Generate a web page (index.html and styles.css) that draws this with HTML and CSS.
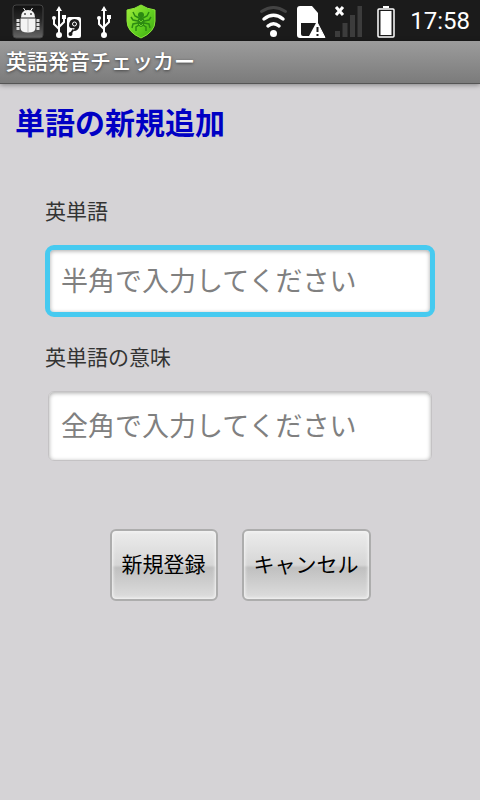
FILE: index.html
```html
<!DOCTYPE html>
<html lang="ja">

<head>
  <meta charset="UTF-8">
  <meta name="viewport" content="width=device-width, initial-scale=1">
  <title>英語発音チェッカー</title>
  <link rel="stylesheet" href="styles.css">
</head>

<body>
  <div class="status-bar">
    <!-- debug -->
    <svg width="32" height="40" viewBox="0 0 32 40" aria-hidden="true">
      <defs>
        <linearGradient id="tile" x1="0" y1="0" x2="0" y2="1">
          <stop offset="0" stop-color="#101010"/>
          <stop offset="0.45" stop-color="#282828"/>
          <stop offset="1" stop-color="#666"/>
        </linearGradient>
      </defs>
      <rect x="1" y="4" width="30" height="33" rx="3" fill="url(#tile)" stroke="#444"/>
      <path d="M9 16.500q0-7.500 7-7.500t7 7.500z" fill="#f4f4f4"/>
      <path d="M11.500 7l2 3M20.500 7l-2 3" stroke="#f4f4f4"/>
      <path d="M8.500 17.500h15V27q0 4.500-7.500 4.500T8.500 27z" fill="#f4f4f4"/>
      <path d="M4.500 19.500h3M24.500 19.500h3M4.500 23.500h3M24.500 23.500h3M4.500 27.500h3M24.500 27.500h3" stroke="#ddd" stroke-width="3"/>
      <path d="M16 18v13" stroke="#bbb"/>
      <circle cx="13" cy="13" r="1" fill="#444"/>
      <circle cx="19" cy="13" r="1" fill="#444"/>
    </svg>
    <!-- usb storage -->
    <svg width="36" height="40" viewBox="0 0 36 40" aria-hidden="true">
      <g fill="none" stroke="#fff" stroke-width="2">
        <path d="M7 9v24M2 18v5l5 5M12 16v5l-5 5"/>
        <circle cx="7" cy="34" r="2" fill="#fff"/>
      </g>
      <path d="M7 5l-3 5h6z" fill="#fff"/>
      <circle cx="2" cy="17" r="2" fill="#fff"/>
      <rect x="10" y="14" width="4" height="4" fill="#fff"/>
      <rect x="15" y="16" width="14" height="21" rx="2" fill="#fff"/>
      <path d="M17 25q0-7 5.500-7t5 6-6 6q1-2 1-3-5 1-5.500-2z" fill="#1b1b1b"/>
      <circle cx="22.500" cy="23" r="2" fill="none" stroke="#fff"/>
      <path d="M18 33.500l3.500-5" stroke="#1b1b1b" stroke-width="2"/>
      <circle cx="18.500" cy="33" r="2" fill="#1b1b1b"/>
    </svg>
    <!-- usb -->
    <svg width="22" height="40" viewBox="0 0 22 40" aria-hidden="true">
      <g fill="none" stroke="#fff" stroke-width="2">
        <path d="M8 9v24M3 18v5l5 5M13 16v5l-5 5"/>
        <circle cx="8" cy="34" r="2" fill="#fff"/>
      </g>
      <path d="M8 5l-3 5h6z" fill="#fff"/>
      <circle cx="3" cy="17" r="2" fill="#fff"/>
      <rect x="11" y="14" width="4" height="4" fill="#fff"/>
    </svg>
    <!-- antivirus -->
    <svg width="30" height="40" viewBox="0 0 30 40" aria-hidden="true">
      <defs>
        <linearGradient id="shield" x1="0" y1="0" x2="1" y2="1">
          <stop offset="0" stop-color="#a4ec3c"/>
          <stop offset="0.5" stop-color="#66d422"/>
          <stop offset="1" stop-color="#3aa610"/>
        </linearGradient>
      </defs>
      <path d="M15 4q6 4 14 5v11q0 11-14 17Q1 31 1 20V9q8-1 14-5z" fill="url(#shield)" stroke="#8ae63a"/>
      <ellipse cx="15" cy="21" rx="3.500" ry="5" fill="#2c8a12"/>
      <circle cx="15" cy="14" r="3" fill="#2c8a12"/>
      <path d="M13 17l-4-2-2-4M17 17l4-2 2-4M12 20l-5-1-2-3M18 20l5-1 2-3M12 22l-5 1-1 4M18 22l5 1 1 4M13 24l-3 2v4M17 24l3 2v4" fill="none" stroke="#2c8a12" stroke-width="1.500"/>
      <path d="M13 19l2 2 2-2M13 23l2 2 2-2" fill="none" stroke="#66cc2a"/>
    </svg>

    <span class="spacer"></span>

    <!-- wifi -->
    <svg width="29" height="40" viewBox="0 0 29 40" aria-hidden="true">
      <g fill="none" stroke="#fff" stroke-width="3.500" stroke-linecap="round">
        <path d="M2.500 10.500Q14.500 2.500 26.500 10.500" stroke="#444" stroke-width="3"/>
        <path d="M5 18Q14.500 10.500 24 18"/>
        <path d="M9 25Q14.500 20.500 20 25"/>
      </g>
      <circle cx="14.500" cy="32.500" r="3.500" fill="#fff"/>
    </svg>
    <!-- sim warning -->
    <svg width="30" height="40" viewBox="0 0 30 40" aria-hidden="true">
      <path d="M4 5h12l6 7v23q0 2-2 2H4q-3 0-3-3V8q0-3 3-3z" fill="#fff"/>
      <path d="M5 22h15l-7 13H7q-2 0-2-2z" fill="#1b1b1b"/>
      <path d="M21.500 22L29 36.500H14z" fill="#fff" stroke="#fff" stroke-linejoin="round"/>
      <path d="M21.500 26v5M21.500 33v2" stroke="#1b1b1b" stroke-width="2"/>
    </svg>
    <!-- no signal -->
    <svg width="30" height="40" viewBox="0 0 30 40" aria-hidden="true">
      <path d="M1 30h5v6H1zM8.500 22h5v14h-5zM16 14h5v22h-5zM23.500 5h4.500v31h-4.500z" fill="#3c3c3c"/>
      <path d="M2 6l7 8M9 6l-7 8" stroke="#fff" stroke-width="3"/>
    </svg>
    <!-- battery -->
    <svg width="30" height="40" viewBox="0 0 30 40" aria-hidden="true">
      <rect x="11" y="5" width="6" height="2" fill="#fff"/>
      <rect x="6" y="8" width="16" height="28" rx="1" fill="none" stroke="#fff" stroke-width="1.500"/>
      <rect x="8.500" y="10" width="11" height="24" fill="#fff"/>
    </svg>
    <time class="clock" datetime="17:58">17:58</time>
  </div>

  <header class="title-bar">英語発音チェッカー</header>

  <main>
    <h1>単語の新規追加</h1>

    <form class="word-form">
      <label for="word">英単語</label>
      <input type="text" id="word" class="active" placeholder="半角で入力してください">

      <label for="meaning">英単語の意味</label>
      <input type="text" id="meaning" placeholder="全角で入力してください">

      <div class="buttons">
        <button type="button">新規登録</button>
        <button type="button">キャンセル</button>
      </div>
    </form>
  </main>
</body>

</html>
```
FILE: styles.css
```css
* {
  box-sizing: border-box;
}

body {
  margin: 0;
  min-height: 100vh;
  background-color: #d5d3d6;
  font-family: "Noto Sans CJK JP", sans-serif;
  color: #333;
}

.status-bar {
  display: flex;
  align-items: center;
  gap: 8px;
  height: 41px;
  padding: 0 10px 0 12px;
  background-color: #1b1b1b;
}

.status-bar svg {
  flex: none;
}

.spacer {
  flex: 1;
}

.clock {
  color: #fff;
  font-family: Roboto, sans-serif;
  font-size: 24px;
  line-height: 40px;
}

.title-bar {
  height: 43px;
  padding: 0 6px;
  border-bottom: 1px solid #555;
  background: linear-gradient(#9c9c9c, #7b7b7b);
  box-shadow: 0 1px 5px rgba(0, 0, 0, 0.4);
  color: #fff;
  font-size: 21px;
  font-weight: 500;
  line-height: 38px;
  text-shadow: 0 1px 3px #444;
}

main {
  padding: 14px 15px;
}

h1 {
  margin: 0;
  color: #0000c4;
  font-size: 30px;
  font-weight: 700;
  line-height: 46px;
}

.word-form {
  padding: 49px 30px 0;
}

label {
  display: block;
  font-size: 21px;
  line-height: 34px;
}

input {
  display: block;
  width: calc(100% - 6px);
  height: 70px;
  margin: 18px 3px 68px;
  padding: 0 12px 4px;
  border: 1px solid #c4c2c4;
  border-radius: 6px;
  background-color: #fff;
  box-shadow: inset 0 1px 4px rgba(0, 0, 0, 0.35);
  font-family: inherit;
  font-size: 27px;
}

input.active {
  width: 100%;
  height: 72px;
  margin: 18px 0 22px;
  border: 5px solid #46caf0;
  border-radius: 9px;
  padding: 0 11px 4px;
  box-shadow: inset 0 1px 4px rgba(0, 0, 0, 0.35);
}

input:focus {
  outline: none;
  border-color: #46caf0;
}

input::placeholder {
  color: #808080;
}

.buttons {
  display: flex;
  justify-content: center;
  gap: 24px;
}

button {
  height: 72px;
  padding: 0 10px 4px;
  border: 2px solid #adadad;
  border-radius: 6px;
  background: linear-gradient(#ececec, #d6d6d6 50%, #c0c0c0 54%, #dedede);
  box-shadow: inset 0 0 3px 1px #f4f4f4;
  color: #000;
  font-family: inherit;
  font-size: 21px;
  cursor: pointer;
}

button:active {
  background: #46caf0;
}
```
